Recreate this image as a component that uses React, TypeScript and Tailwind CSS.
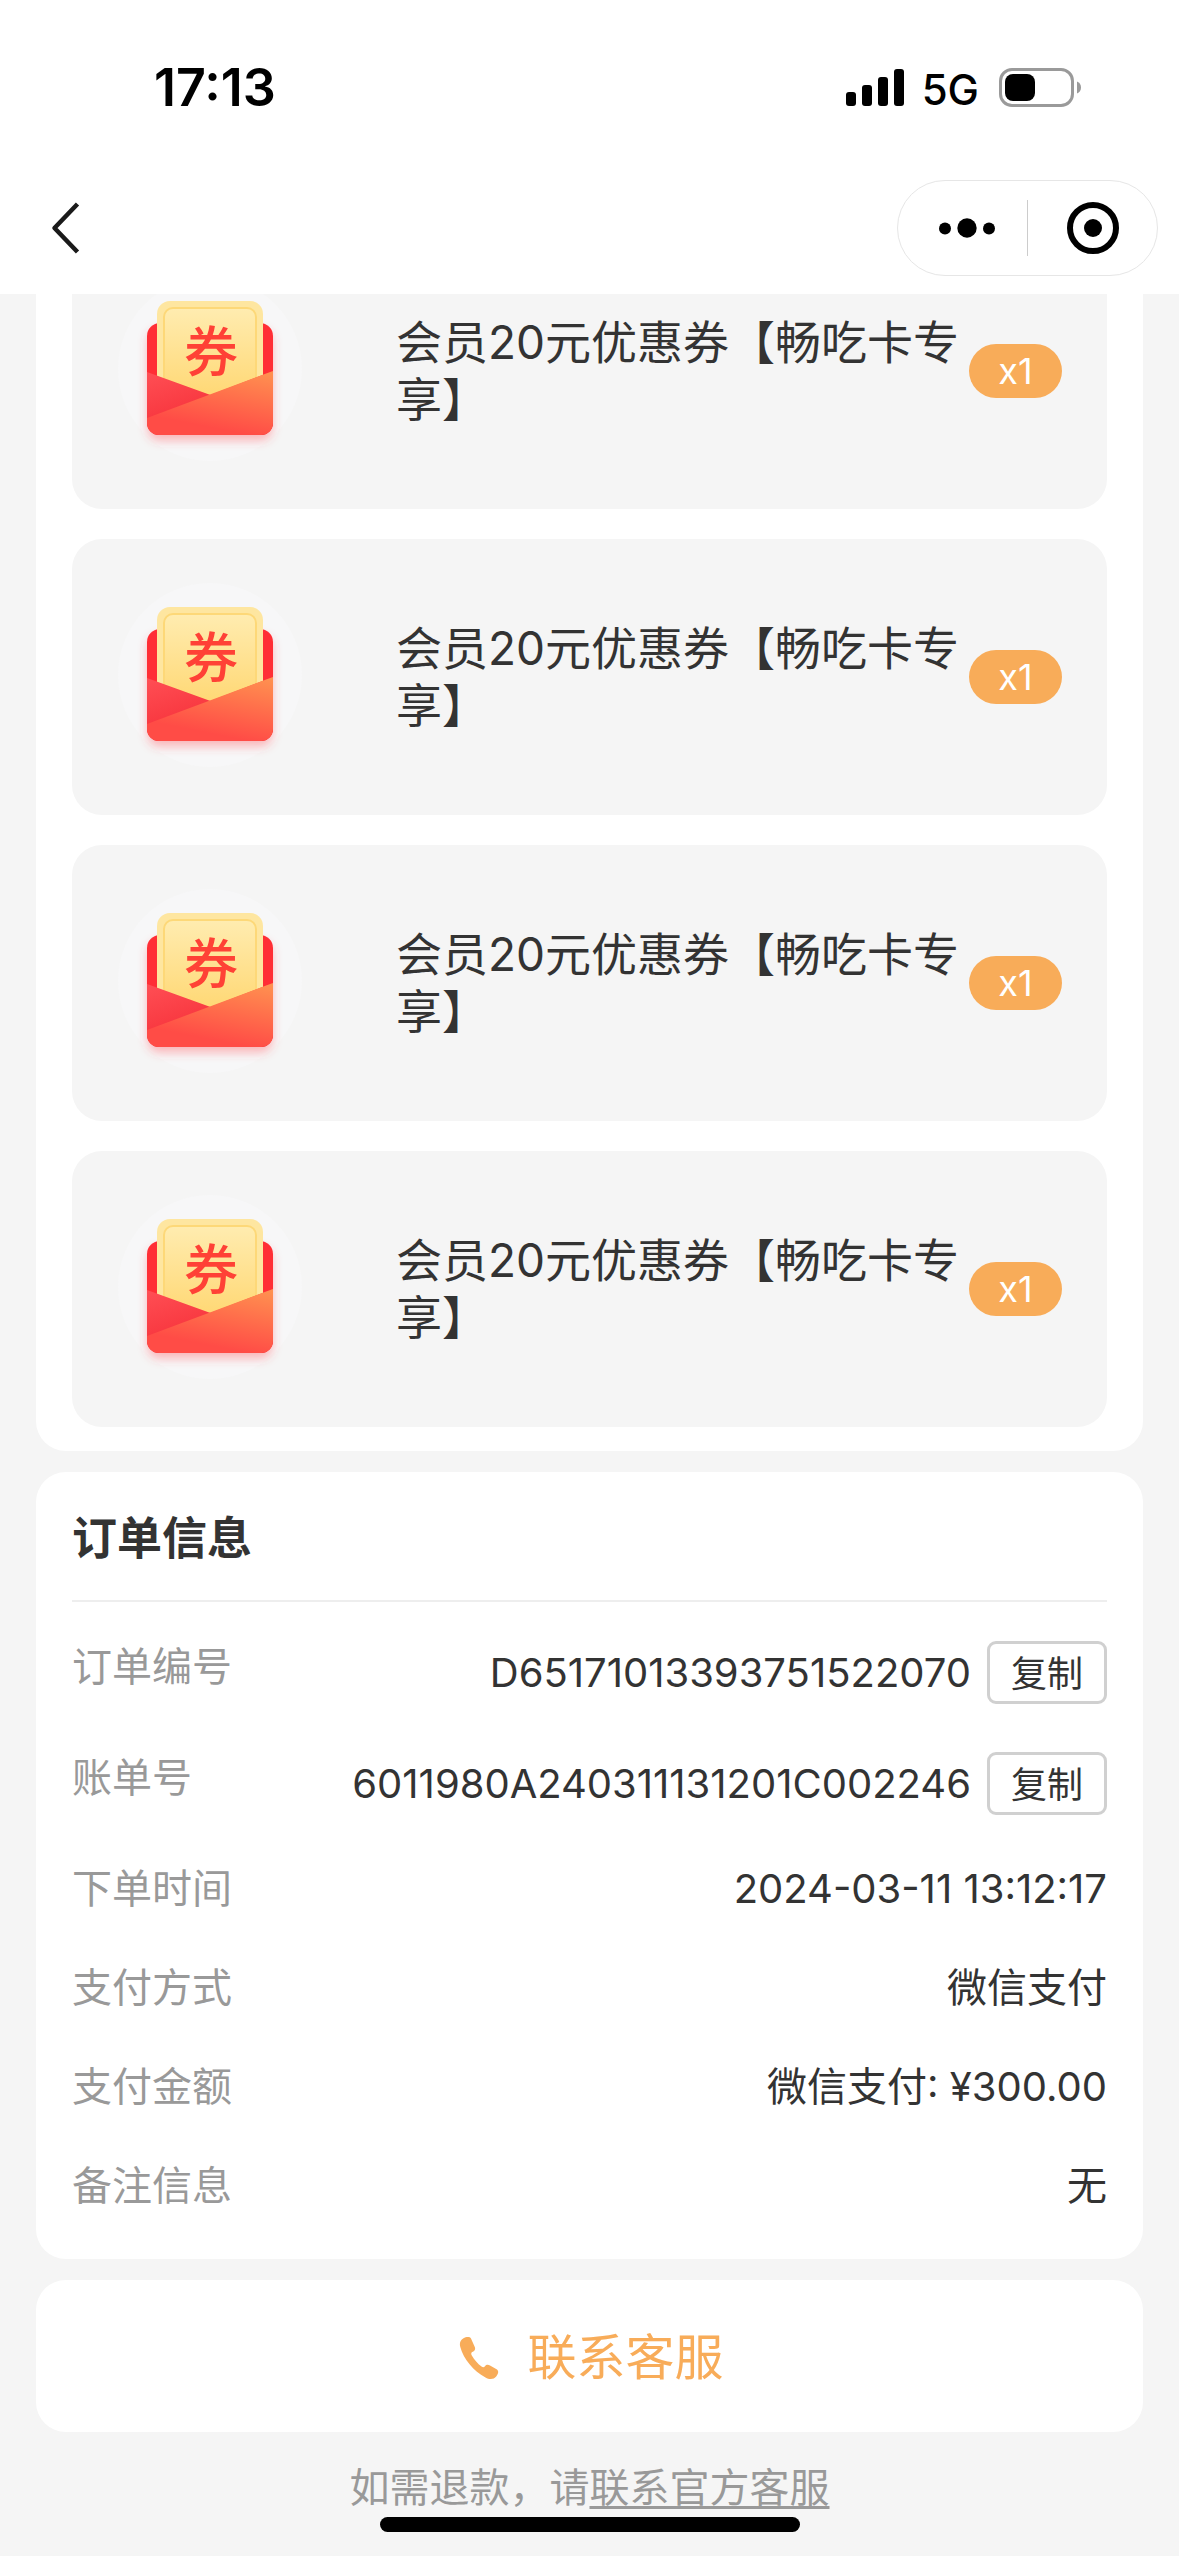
import React from 'react';

interface Coupon {
  id: number;
  name: string;
  count: number;
}

interface OrderField {
  label: string;
  value: string;
  copyable?: boolean;
}

const coupons: Coupon[] = [
  { id: 1, name: '会员20元优惠券【畅吃卡专享】', count: 1 },
  { id: 2, name: '会员20元优惠券【畅吃卡专享】', count: 1 },
  { id: 3, name: '会员20元优惠券【畅吃卡专享】', count: 1 },
  { id: 4, name: '会员20元优惠券【畅吃卡专享】', count: 1 },
];

const orderFields: OrderField[] = [
  { label: '订单编号', value: 'D65171013393751522070', copyable: true },
  { label: '账单号', value: '6011980A240311131201C002246', copyable: true },
  { label: '下单时间', value: '2024-03-11 13:12:17' },
  { label: '支付方式', value: '微信支付' },
  { label: '支付金额', value: '微信支付: ¥300.00' },
  { label: '备注信息', value: '无' },
];

const StatusBar: React.FC = () => (
  <div className="flex h-44 items-center justify-between pl-[154px] pr-[98px] text-black">
    <span className="text-[52px] leading-none font-semibold">17:13</span>
    <div className="flex items-center">
      <svg width="58" height="38" viewBox="0 0 58 38" aria-hidden="true">
        <rect x="0" y="23" width="10" height="14" rx="3" />
        <rect x="16" y="16" width="10" height="21" rx="3" />
        <rect x="32" y="8" width="10" height="29" rx="3" />
        <rect x="48" y="0" width="10" height="37" rx="3" />
      </svg>
      <span className="mr-5 ml-[18px] pt-1 text-[42px] leading-none font-medium">5G</span>
      <svg width="82" height="40" viewBox="0 0 82 40" aria-hidden="true">
        <rect x="1.5" y="1.5" width="72" height="36" rx="11.5" fill="none" stroke="#9a9a9a" strokeWidth="3" />
        <rect x="6" y="6" width="30" height="27" rx="8" />
        <path d="M78 13.5c2.6 1 4 3.2 4 6s-1.4 5-4 6z" fill="#9a9a9a" />
      </svg>
    </div>
  </div>
);

const NavBar: React.FC = () => (
  <div className="flex items-center justify-between pt-1 pr-[21px] pb-[18px] pl-12">
    <button type="button" aria-label="返回" className="flex h-24 w-12 items-center">
      <svg width="36" height="56" viewBox="0 0 36 56" fill="none" stroke="#1a1a1a" strokeWidth="4.5" aria-hidden="true">
        <path d="M29.5 4 6.500 28l23 24" strokeLinejoin="round" />
      </svg>
    </button>
    <div className="flex h-24 items-center rounded-full border border-[#e6e6e6]">
      <button type="button" aria-label="更多" className="flex h-full w-[129px] items-center justify-center pl-2">
        <svg width="56" height="20" viewBox="0 0 56 20" aria-hidden="true">
          <circle cx="6" cy="10.5" r="6" />
          <circle cx="28" cy="10" r="9.7" />
          <circle cx="50" cy="10.5" r="6" />
        </svg>
      </button>
      <div className="h-14 w-px bg-[#cccccc]" />
      <button type="button" aria-label="关闭" className="flex h-full w-[129px] items-center justify-center">
        <svg width="52" height="52" viewBox="0 0 52 52" aria-hidden="true">
          <circle cx="26" cy="26" r="23" fill="none" stroke="#000" strokeWidth="6" />
          <circle cx="26" cy="26" r="9" />
        </svg>
      </button>
    </div>
  </div>
);

// 红包优惠券图标
const CouponIcon: React.FC = () => (
  <svg className="size-[276px] shrink-0" viewBox="0 0 276 276" aria-hidden="true">
    <defs>
      <linearGradient id="ticket" x1="0" y1="0" x2="0" y2="1">
        <stop offset="0" stopColor="#ffecb0" />
        <stop offset="1" stopColor="#ffd366" />
      </linearGradient>
      <linearGradient id="flap" x1="0" y1="0" x2="0.6" y2="0.9">
        <stop offset="0" stopColor="#ff4f55" />
        <stop offset="1" stopColor="#f42a33" />
      </linearGradient>
      <linearGradient id="front" x1="0.9" y1="0" x2="0.55" y2="0.9">
        <stop offset="0" stopColor="#ff9050" />
        <stop offset="1" stopColor="#ff4c46" />
      </linearGradient>
      <filter id="glow" x="-30%" y="-30%" width="160%" height="170%">
        <feDropShadow dx="0" dy="6" stdDeviation="5" floodColor="#ff4046" floodOpacity="0.35" />
      </filter>
      <clipPath id="body">
        <rect x="75" y="60" width="126" height="142" rx="12" />
      </clipPath>
    </defs>
    <circle cx="138" cy="136" r="92" fill="#f7f7f8" />
    <rect x="75" y="90" width="126" height="112" rx="13" fill="#ff2e35" filter="url(#glow)" />
    <rect x="85" y="68" width="106" height="120" rx="13" fill="#fee6a0" />
    <rect x="92" y="75" width="92" height="110" rx="9" fill="url(#ticket)" stroke="#fdd878" strokeWidth="2" />
    <text
      x="139"
      y="139"
      textAnchor="middle"
      className="fill-[#ff4136] font-['Noto_Sans_CJK_SC',sans-serif] text-[54px] font-medium"
    >
      券
    </text>
    <g clipPath="url(#body)">
      <path d="M75 139 138.5 162 201 138V202H75z" fill="url(#flap)" />
      <path d="M75 185 201 138V202H75z" fill="url(#front)" />
    </g>
  </svg>
);

const CouponItem: React.FC<{ coupon: Coupon }> = ({ coupon }) => (
  <li className="flex items-center rounded-[30px] bg-[#f5f5f5] pr-[45px]">
    <CouponIcon />
    <p className="ml-12 flex-1 text-[46px] leading-[57px]">{coupon.name}</p>
    <span className="flex h-[54px] w-[93px] shrink-0 items-center justify-center rounded-full bg-[#f8ac59] text-[36px] text-white">
      x{coupon.count}
    </span>
  </li>
);

const OrderRow: React.FC<{ field: OrderField }> = ({ field }) => (
  <div className="flex items-start justify-between text-[40px] leading-[51px]">
    <dt className="text-[#999999]">{field.label}</dt>
    <dd className="flex items-center gap-4">
      {field.value}
      {field.copyable && (
        <button
          type="button"
          onClick={() => navigator.clipboard?.writeText(field.value)}
          className="flex h-[63px] w-[120px] items-center justify-center rounded-[9px] border-3 border-[#d0d0d0] pt-1 text-[36px]"
        >
          复制
        </button>
      )}
    </dd>
  </div>
);

const App: React.FC = () => {
  return (
    <div className="min-h-screen bg-[#f5f5f5] font-['Inter','Noto_Sans_CJK_SC',sans-serif] text-[#333333]">
      <header className="sticky top-0 z-10 bg-white">
        <StatusBar />
        <NavBar />
      </header>

      {/* 列表已向上滚动，首个券被标题栏遮住一部分 */}
      <main className="-mt-[61px] flex flex-col gap-[21px] px-9">
        <section className="rounded-b-[30px] bg-white px-9 pb-6">
          <ul className="flex flex-col gap-[30px]">
            {coupons.map((coupon) => (
              <CouponItem key={coupon.id} coupon={coupon} />
            ))}
          </ul>
        </section>

        <section className="rounded-[30px] bg-white px-9 pb-12">
          <h2 className="flex h-[130px] items-center border-b-2 border-[#eeeeee] pt-1.5 text-[45px] font-semibold">
            订单信息
          </h2>
          <dl className="flex flex-col gap-12 pt-[39px]">
            {orderFields.map((field) => (
              <OrderRow key={field.label} field={field} />
            ))}
          </dl>
        </section>

        <button
          type="button"
          className="flex h-[152px] items-center justify-center gap-6 rounded-[30px] bg-white pt-1 text-[49px] text-[#f8ac59]"
        >
          <svg width="48" height="48" viewBox="0 0 48 48" fill="currentColor" aria-hidden="true">
            <path d="M8.500 4.200C11 2.800 14.800 2.300 16 4.500L20 13.500C20.600 15.500 19.500 17.200 17.300 18C16 18.600 16 20 16.800 21.500C19.500 26 22.500 29.500 26.500 32.500C28 33.500 29 33.300 30 32.200C31.300 30.500 33.300 30.500 35 31.500L42 35.500C44 37 43.300 40 41.200 42.500C38.800 45.500 34.500 45.800 30.500 43.500C18.500 37 8.500 25 5.300 13C4.200 9 5.500 6 8.500 4.200Z" />
          </svg>
          联系客服
        </button>
      </main>

      <footer className="pt-[30px] pb-[43px] text-center text-[40px] leading-[51px] text-[#999999]">
        如需退款，请
        <a href="#service" className="underline decoration-3 underline-offset-4">
          联系官方客服
        </a>
      </footer>

      <div className="fixed inset-x-0 bottom-6 mx-auto h-[15px] w-[420px] rounded-full bg-black" />
    </div>
  );
};

export default App;
